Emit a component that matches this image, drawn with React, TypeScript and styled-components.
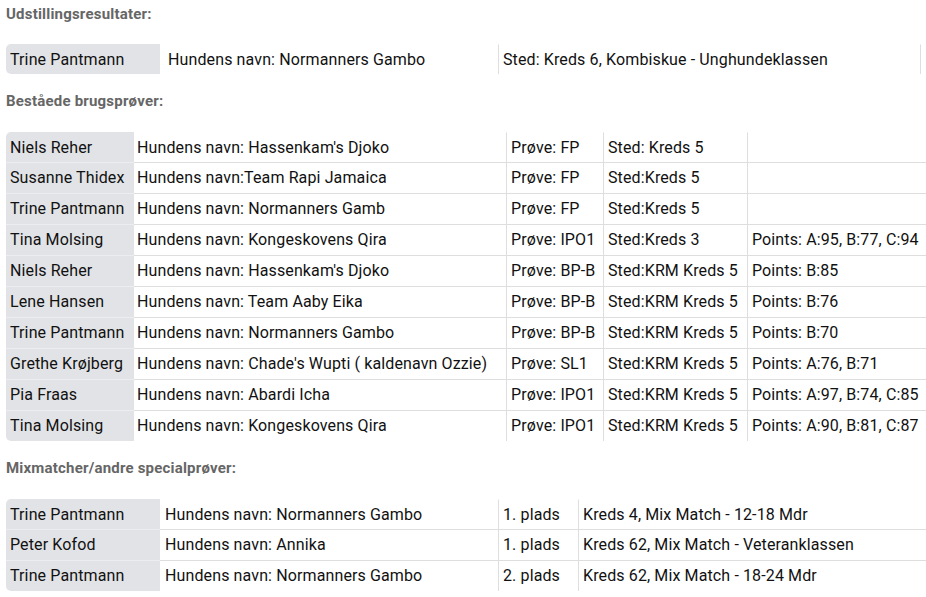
import styled, { createGlobalStyle } from "styled-components";

const GlobalStyle = createGlobalStyle`
  body {
    margin: 0;
    background: #fff;
    font-family: Roboto, "Liberation Sans", sans-serif;
    color: #111;
  }
`;

const Page = styled.div`
  padding: 4px 0 0 6px;
  overflow: hidden;
`;

const Heading = styled.h4`
  margin: 0 0 19px;
  font-size: 15px;
  line-height: 21px;
  font-weight: 700;
  letter-spacing: 0.2px;
  color: #666;
`;

const Section = styled.section`
  & + & {
    margin-top: 17px;
  }
  & + & ${Heading} {
    margin-bottom: 20px;
  }
`;

const Table = styled.div<{ $cols: string }>`
  display: grid;
  grid-template-columns: ${(p) => p.$cols};
  width: max-content;
  font-size: 16px;
  line-height: 20px;
  letter-spacing: 0.12px;
`;

const Cell = styled.div<{
  $first?: boolean;
  $line?: boolean;
  $top?: boolean;
  $bottom?: boolean;
  $sep?: boolean;
  $end?: boolean;
  $indent?: number;
}>`
  display: flex;
  align-items: center;
  padding: 0 3px 0 ${(p) => p.$indent ?? 4}px;
  white-space: nowrap;
  box-sizing: border-box;
  height: ${(p) => (p.$line ? 31 : 30)}px;
  border-top: 1px solid ${(p) => (p.$line ? (p.$first ? "#ededf0" : "#dedede") : "transparent")};
  background: ${(p) => (p.$first ? "#e2e3e6" : "transparent")};
  border-left: ${(p) => (p.$sep ? "1px solid #dedede" : "0")};
  border-right: ${(p) => (p.$end ? "1px solid #dedede" : "0")};
  border-top-left-radius: ${(p) => (p.$first && p.$top ? 5 : 0)}px;
  border-bottom-left-radius: ${(p) => (p.$first && p.$bottom ? 5 : 0)}px;
`;

type TableSpec = {
  title: string;
  cols: string;
  endBorder?: boolean;
  indents?: number[];
  rows: string[][];
};

const tables: TableSpec[] = [
  {
    title: "Udstillingsresultater:",
    cols: "154px 338px 423px",
    endBorder: true,
    indents: [4, 8, 4],
    rows: [["Trine Pantmann", "Hundens navn: Normanners Gambo", "Sted: Kreds 6, Kombiskue - Unghundeklassen"]],
  },
  {
    title: "Beståede brugsprøver:",
    cols: "128px 372px 97px 144px 190px",
    indents: [4, 3, 4, 4, 4],
    rows: [
      ["Niels Reher", "Hundens navn: Hassenkam's Djoko", "Prøve: FP", "Sted: Kreds 5", ""],
      ["Susanne Thidex", "Hundens navn:Team Rapi Jamaica", "Prøve: FP", "Sted:Kreds 5", ""],
      ["Trine Pantmann", "Hundens navn: Normanners Gamb", "Prøve: FP", "Sted:Kreds 5", ""],
      ["Tina Molsing", "Hundens navn: Kongeskovens Qira", "Prøve: IPO1", "Sted:Kreds 3", "Points: A:95, B:77, C:94"],
      ["Niels Reher", "Hundens navn: Hassenkam's Djoko", "Prøve: BP-B", "Sted:KRM Kreds 5", "Points: B:85"],
      ["Lene Hansen", "Hundens navn: Team Aaby Eika", "Prøve: BP-B", "Sted:KRM Kreds 5", "Points: B:76"],
      ["Trine Pantmann", "Hundens navn: Normanners Gambo", "Prøve: BP-B", "Sted:KRM Kreds 5", "Points: B:70"],
      ["Grethe Krøjberg", "Hundens navn: Chade's Wupti ( kaldenavn Ozzie)", "Prøve: SL1", "Sted:KRM Kreds 5", "Points: A:76, B:71"],
      ["Pia Fraas", "Hundens navn: Abardi Icha", "Prøve: IPO1", "Sted:KRM Kreds 5", "Points: A:97, B:74, C:85"],
      ["Tina Molsing", "Hundens navn: Kongeskovens Qira", "Prøve: IPO1", "Sted:KRM Kreds 5", "Points: A:90, B:81, C:87"],
    ],
  },
  {
    title: "Mixmatcher/andre specialprøver:",
    cols: "154px 338px 80px 360px",
    indents: [4, 5, 4, 4],
    rows: [
      ["Trine Pantmann", "Hundens navn: Normanners Gambo", "1. plads", "Kreds 4, Mix Match - 12-18 Mdr"],
      ["Peter Kofod", "Hundens navn: Annika", "1. plads", "Kreds 62, Mix Match - Veteranklassen"],
      ["Trine Pantmann", "Hundens navn: Normanners Gambo", "2. plads", "Kreds 62, Mix Match - 18-24 Mdr"],
    ],
  },
];

export default function App() {
  return (
    <>
      <GlobalStyle />
      <Page>
        {tables.map((t) => (
          <Section key={t.title}>
            <Heading>{t.title}</Heading>
            <Table $cols={t.cols}>
              {t.rows.map((row, ri) =>
                row.map((text, ci) => (
                  <Cell
                    key={`${ri}-${ci}`}
                    $first={ci === 0}
                    $line={ri > 0}
                    $top={ri === 0}
                    $bottom={ri === t.rows.length - 1}
                    $sep={ci > 1}
                    $end={t.endBorder && ci === row.length - 1}
                    $indent={t.indents?.[ci]}
                  >
                    {text}
                  </Cell>
                ))
              )}
            </Table>
          </Section>
        ))}
      </Page>
    </>
  );
}
